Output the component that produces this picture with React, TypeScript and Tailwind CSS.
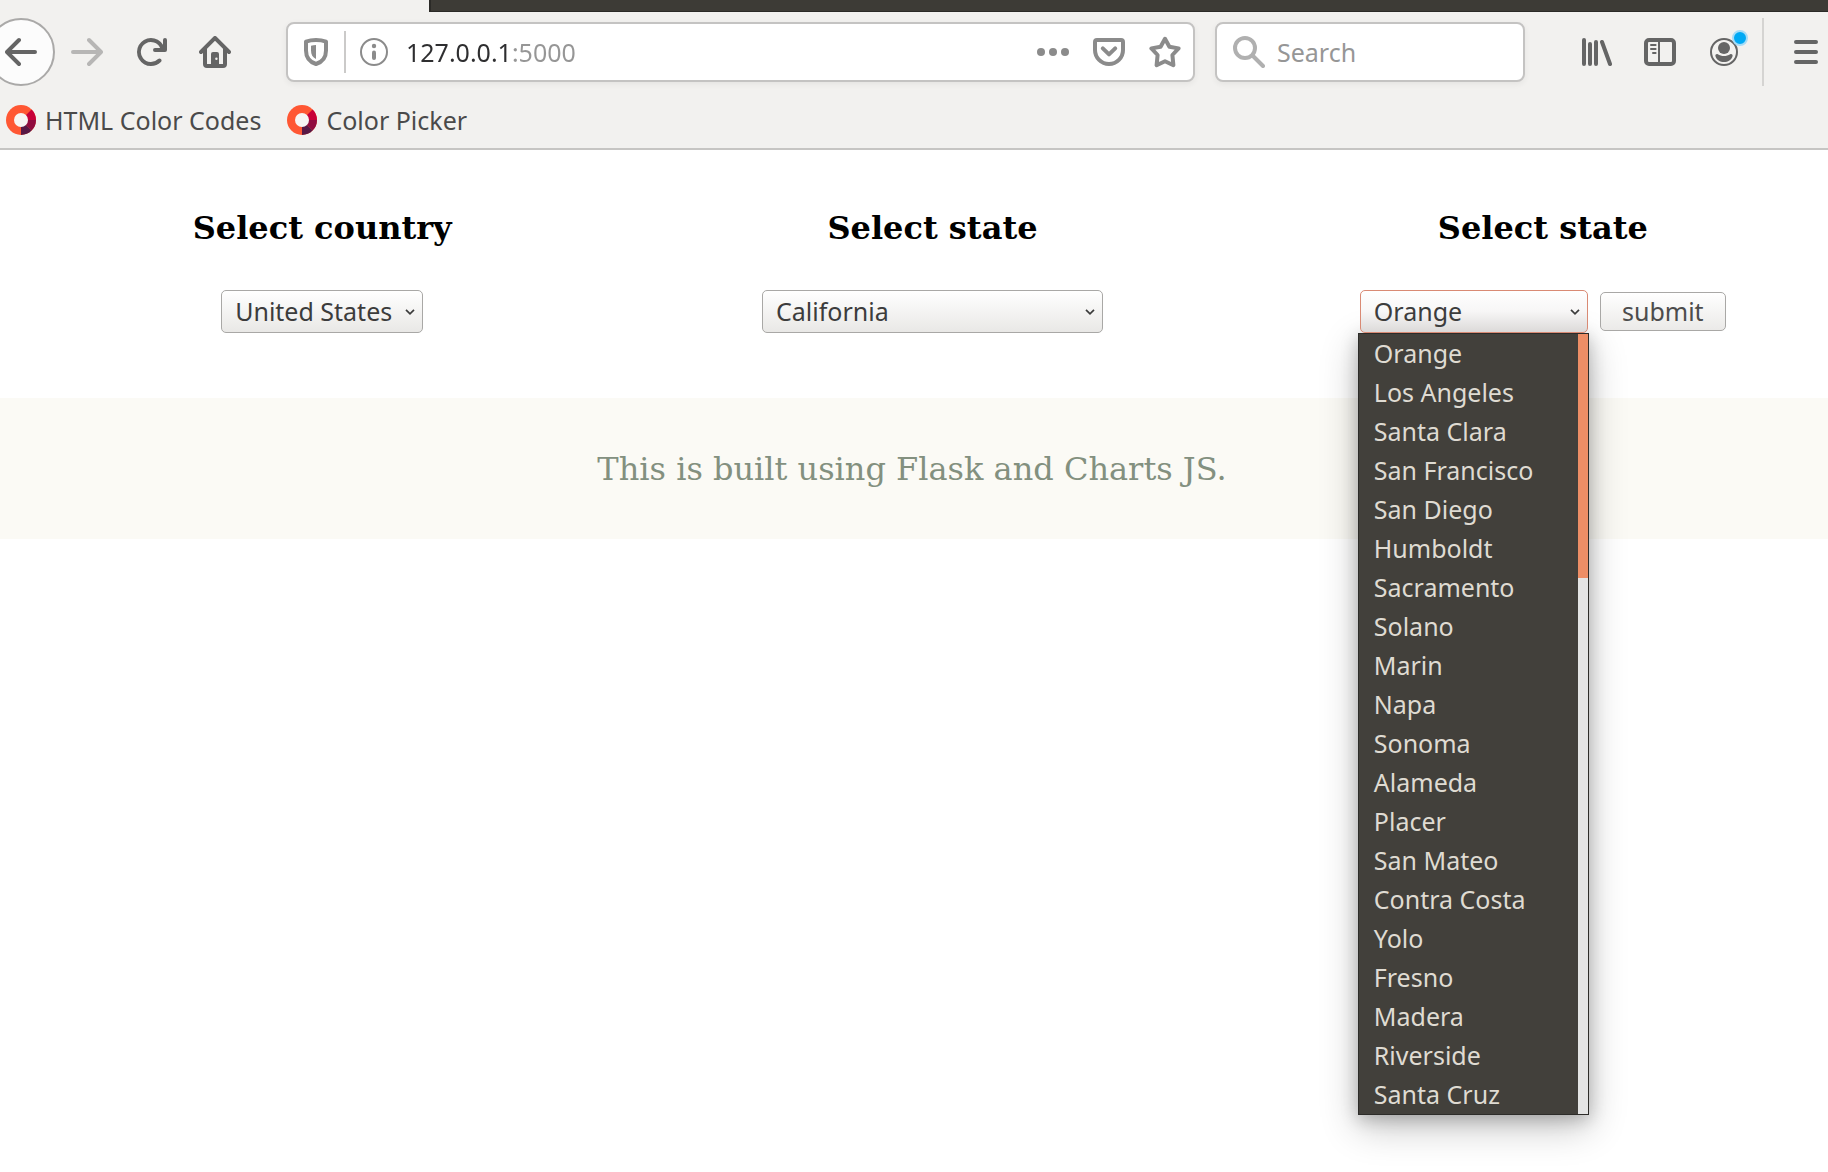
import React, { useState } from "react";

const counties = [
  "Orange", "Los Angeles", "Santa Clara", "San Francisco", "San Diego",
  "Humboldt", "Sacramento", "Solano", "Marin", "Napa",
  "Sonoma", "Alameda", "Placer", "San Mateo", "Contra Costa",
  "Yolo", "Fresno", "Madera", "Riverside", "Santa Cruz",
];

function Icon({ children }: { children: React.ReactNode }) {
  return (
    <svg
      viewBox="0 0 16 16"
      className="size-8 shrink-0"
      fill="none"
      stroke="currentColor"
      strokeWidth="2"
      strokeLinecap="round"
      strokeLinejoin="round"
      aria-hidden="true"
    >
      {children}
    </svg>
  );
}

function ToolButton({ label, className = "", children }: { label: string; className?: string; children: React.ReactNode }) {
  return (
    <button type="button" aria-label={label} className={`shrink-0 ${className}`}>
      <Icon>{children}</Icon>
    </button>
  );
}

const arrowPath =
  "M15 7H3.414l4.293-4.293a1 1 0 0 0-1.414-1.414l-6 6a1 1 0 0 0 0 1.414l6 6a1 1 0 0 0 1.414-1.414L3.414 9H15a1 1 0 0 0 0-2z";

function Bookmark({ label }: { label: string }) {
  return (
    <a href="#" className="flex items-center gap-[9px] text-[25px] text-[#4a4a4a]">
      <svg viewBox="0 0 30 30" className="size-[30px]" aria-hidden="true">
        <circle cx="15" cy="15" r="15" fill="#ff5733" />
        <path d="M15 15L25.6 4.4A15 15 0 0 1 30 15z" fill="#c70039" />
        <path d="M15 15H30A15 15 0 0 1 25.6 25.6z" fill="#900c3f" />
        <path d="M15 15L25.6 25.6A15 15 0 0 1 15 30z" fill="#581845" />
        <circle cx="15" cy="15" r="7" fill="#f7f5f3" />
      </svg>
      <span className="pt-0.5">{label}</span>
    </a>
  );
}

function Dropdown({
  id, options, width, open = false,
}: { id: string; options: string[]; width: string; open?: boolean }) {
  return (
    <div className={`relative z-20 ${width}`}>
      <select
        id={id}
        className={`block h-[43px] w-full appearance-none rounded-[5px] border bg-linear-to-b px-[13px] pb-0.5 text-[25px] leading-[38px] text-[#3c3c3c] outline-none ${
          open ? "border-[#d98a74] from-white via-[#f7f6f6] to-[#dcdad9]" : "border-[#a9a8a6] from-white to-[#e9e8e6]"
        }`}
      >
        {options.map((o) => (
          <option key={o}>{o}</option>
        ))}
      </select>
      <svg viewBox="0 0 10 6" className="pointer-events-none absolute top-[19px] right-2 h-1.5 w-2.5" fill="none" stroke="#3c3c3c" strokeWidth="1.7" aria-hidden="true">
        <path d="M1 .8l4 4 4-4" />
      </svg>
    </div>
  );
}

function Browser() {
  const [url, setUrl] = useState("127.0.0.1:5000");
  return (
    <header className="border-b-2 border-[#c6c5c3] bg-[#f2f1ef]">
      <div className="ml-[429px] h-3 border-b border-l-2 border-[#2b2a27] bg-[#3d3b36]" />
      <nav className="flex h-20 items-center text-[#656565]" aria-label="Browser toolbar">
        <button type="button" aria-label="Back" className="-ml-[13px] flex size-[68px] shrink-0 items-center justify-center rounded-full border-2 border-[#aaa9a8] bg-[#fcfcfc]">
          <Icon>
            <path d={arrowPath} fill="currentColor" stroke="none" />
          </Icon>
        </button>
        <ToolButton label="Forward" className="ml-4 text-[#b7b6b5]">
          <path d={arrowPath} transform="translate(16 0) scale(-1 1)" fill="currentColor" stroke="none" />
        </ToolButton>
        <ToolButton label="Reload" className="ml-8">
          <path
            d="M15 1a1 1 0 0 0-1 1v2.418A6.995 6.995 0 1 0 8 15a6.954 6.954 0 0 0 4.95-2.05 1 1 0 0 0-1.414-1.414A5.019 5.019 0 1 1 12.549 6H10a1 1 0 0 0 0 2h5a1 1 0 0 0 1-1V2a1 1 0 0 0-1-1z"
            fill="currentColor"
            stroke="none"
          />
        </ToolButton>
        <ToolButton label="Home" className="ml-8">
          <path
            d="M15.707 7.293l-7-7a1 1 0 0 0-1.414 0l-7 7a1 1 0 0 0 1.414 1.414L2 8.414V14a2 2 0 0 0 2 2h8a2 2 0 0 0 2-2V8.414l.293.293a1 1 0 0 0 1.414-1.414zM12 14h-2V9a1 1 0 0 0-1-1H7a1 1 0 0 0-1 1v5H4V6.414l4-4 4 4z"
            fill="currentColor"
            stroke="none"
          />
          <circle cx="8.7" cy="11.4" r=".6" fill="#f2f1ef" stroke="none" />
        </ToolButton>

        <div className="ml-[55px] flex h-[60px] min-w-0 flex-1 items-center rounded-lg border-2 border-[#c4c3c2] bg-white px-3 text-[#8b8b8b] shadow-[0_2px_6px_rgba(0,0,0,0.06)]">
          <ToolButton label="Tracking protection">
            <path d="M8 2c-1.9 0-3.6.3-5 .8v4.4C3 10.700 5 13 8 14c3-1 5-3.300 5-6.800V2.800C11.600 2.300 9.900 2 8 2z" />
            <path d="M8 4.500v7C6.300 10.600 5.500 9.200 5.500 7.200V4.900C6.300 4.600 7.100 4.500 8 4.500z" fill="currentColor" stroke="none" />
          </ToolButton>
          <div className="ml-3 h-[42px] w-0.5 bg-[#cbcac9]" />
          <ToolButton label="Site information" className="ml-3">
            <circle cx="8" cy="8" r="6.500" strokeWidth="1" />
            <circle cx="8" cy="5" r="1.100" fill="currentColor" stroke="none" />
            <path d="M8 8.200V11" />
          </ToolButton>
          <input
            aria-label="Address"
            value={url}
            onChange={(e) => setUrl(e.target.value)}
            className="ml-4 min-w-0 flex-1 bg-[linear-gradient(90deg,#2e2e30_108px,#969696_108px)] bg-clip-text pt-0.5 text-[25px] text-transparent outline-none"
          />
          <ToolButton label="Page actions">
            <g fill="currentColor" stroke="none">
              <circle cx="2" cy="8" r="2" />
              <circle cx="8" cy="8" r="2" />
              <circle cx="14" cy="8" r="2" />
            </g>
          </ToolButton>
          <ToolButton label="Save to Pocket" className="ml-6">
            <path d="M2 2h12a1 1 0 0 1 1 1v4a7 7 0 0 1-14 0V3a1 1 0 0 1 1-1z" />
            <path d="M4.900 6.200L8 9.200l3.100-3" />
          </ToolButton>
          <ToolButton label="Bookmark this page" className="ml-6">
            <path d="M8 1.400L10.200 5.400 14.800 6.200 11.700 9.500 12.200 14.600 8 12.600 3.800 14.600 4.300 9.500 1.200 6.200 5.800 5.400z" />
          </ToolButton>
        </div>

        <label className="ml-5 flex h-[60px] w-[310px] shrink-0 items-center gap-3 rounded-lg border-2 border-[#c4c3c2] bg-white pl-4 text-[#b0b0b0] shadow-[0_2px_6px_rgba(0,0,0,0.06)]">
          <Icon>
            <circle cx="6" cy="6" r="5" />
            <path d="M10 10l5 5" />
          </Icon>
          <input type="text" aria-label="Search" placeholder="Search" className="min-w-0 flex-1 pt-0.5 text-[25px] text-[#2e2e30] outline-none placeholder:text-[#969696]" />
        </label>

        <ToolButton label="Library" className="ml-[55px]">
          <path d="M2 2v12M5 4v10M8 3v11M11 3l4 11" />
        </ToolButton>
        <ToolButton label="Sidebars" className="ml-8">
          <rect x="1" y="2" width="14" height="12" rx="1.500" />
          <path d="M7.500 3v10M3.500 4.500h2.300M3.500 6.500h2.300M4.500 8.500h1.300" strokeWidth="1" />
        </ToolButton>
        <button type="button" aria-label="Account" className="relative ml-8 shrink-0">
          <Icon>
            <circle cx="8" cy="8" r="6.500" strokeWidth="1" />
            <g fill="currentColor" stroke="none">
              <circle cx="8" cy="6" r="3" />
              <path d="M3.700 10c-.1-.7.500-1.200 1.200-.9 1.800 1.200 4.400 1.200 6.200 0 .7-.3 1.300.2 1.200.9C11.700 12 10 13 8 13s-3.700-1-4.300-3z" />
            </g>
          </Icon>
          <span className="absolute -top-1.5 -right-2 size-4 rounded-full border-2 border-[#a5dcf7] bg-[#00a9f4]" />
        </button>
        <div className="ml-[22px] h-[68px] w-0.5 shrink-0 bg-[#d5d4d2]" />
        <ToolButton label="Open menu" className="mr-1.5 ml-[26px]">
          <path d="M3 3h10M3 8h10M3 13h10" />
        </ToolButton>
      </nav>
      <nav className="flex h-14 items-center gap-[26px] pl-1.5" aria-label="Bookmarks">
        <Bookmark label="HTML Color Codes" />
        <Bookmark label="Color Picker" />
      </nav>
    </header>
  );
}

function Field({ id, title, children }: { id: string; title: string; children: React.ReactNode }) {
  return (
    <div className="flex flex-col items-center gap-[43px]">
      <label htmlFor={id} className="font-['DejaVu_Serif',serif] text-[32px] leading-[38px] font-bold text-black">
        {title}
      </label>
      <div className="flex items-center gap-3">{children}</div>
    </div>
  );
}

export default function App() {
  return (
    <div className="min-h-screen overflow-hidden bg-white font-['Noto_Sans',sans-serif]">
      <Browser />
      <main>
        <form className="-mr-5 ml-[17px] grid grid-cols-3 pt-[59px]" onSubmit={(e) => e.preventDefault()}>
          <Field id="country" title="Select country">
            <Dropdown id="country" options={["United States"]} width="w-[202px]" />
          </Field>
          <Field id="state" title="Select state">
            <Dropdown id="state" options={["California"]} width="w-[341px]" />
          </Field>
          <Field id="county" title="Select state">
            <div className="relative">
              <Dropdown id="county" options={counties} width="w-[228px]" open />
              <div className="absolute top-[43px] -left-0.5 z-10 flex w-[231px] border border-[#2d2c29] bg-[#42403b] shadow-[0_12px_36px_rgba(0,0,0,0.24),0_4px_16px_rgba(0,0,0,0.22)]">
                <ul role="listbox" aria-label="Counties" className="flex-1 pl-[15px] text-[25px] leading-[39px] text-[#dfdbd2]">
                  {counties.map((c) => (
                    <li key={c} role="option" aria-selected={c === "Orange"}>
                      {c}
                    </li>
                  ))}
                </ul>
                <div className="w-2.5 bg-[#e4e4e4]">
                  <div className="h-[244px] bg-[#ed8e66]" />
                </div>
              </div>
            </div>
            <button type="submit" className="relative z-20 h-[39px] w-[126px] rounded-[5px] border border-[#a9a8a6] bg-linear-to-b from-white to-[#ebeae8] pb-0.5 text-[25px] leading-[34px] text-[#4c4c4c]">
              submit
            </button>
          </Field>
        </form>
        <footer className="mt-[65px] bg-[#fbfaf5] pt-[53px] pr-1 pb-[51px] text-center font-['DejaVu_Serif',serif] text-[32px] leading-[37px] text-[#83907f]">
          <p>This is built using Flask and Charts JS.</p>
        </footer>
      </main>
    </div>
  );
}
